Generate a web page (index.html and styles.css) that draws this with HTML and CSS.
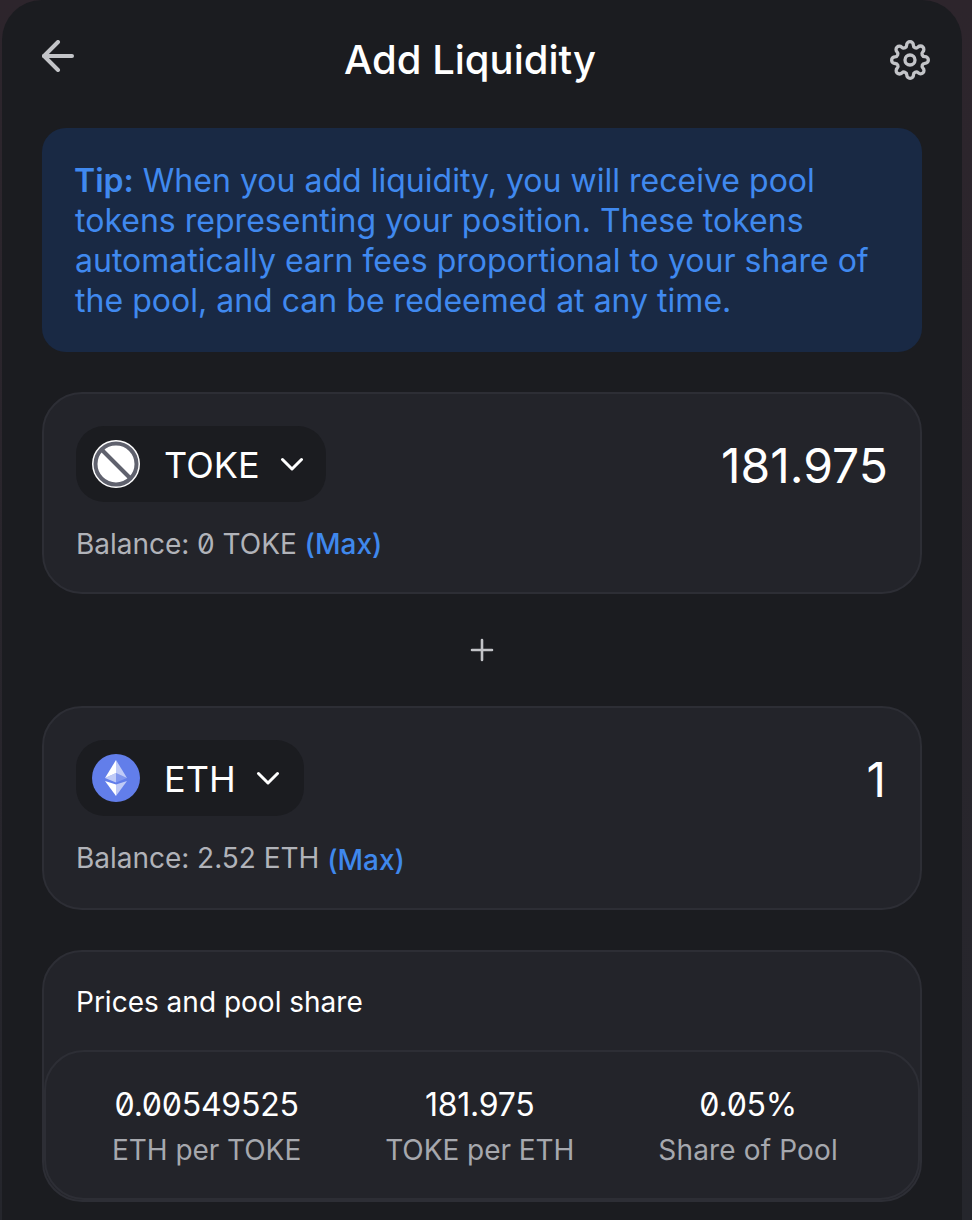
FILE: index.html
```html
<!DOCTYPE html>
<html lang="en">
<head>
<meta charset="utf-8">
<title>Add Liquidity</title>
<link rel="stylesheet" href="styles.css">
</head>
<body>
<main class="panel">
  <header class="top">
    <svg class="back" viewBox="4 4 16 16" fill="none" stroke="currentColor" stroke-width="2" stroke-linecap="round" stroke-linejoin="round"><path d="M19 12H5"/><path d="M12 19l-7-7 7-7"/></svg>
    <h1 class="title">Add Liquidity</h1>
    <svg class="gear" viewBox="0 0 24 24" fill="none" stroke="currentColor" stroke-width="2" stroke-linecap="round" stroke-linejoin="round"><circle cx="12" cy="12" r="3"/><path d="M19.4 15a1.65 1.65 0 0 0 .33 1.82l.06.06a2 2 0 0 1 0 2.83 2 2 0 0 1-2.83 0l-.06-.06a1.65 1.65 0 0 0-1.82-.33 1.65 1.65 0 0 0-1 1.51V21a2 2 0 0 1-2 2 2 2 0 0 1-2-2v-.09A1.65 1.65 0 0 0 9 19.4a1.65 1.65 0 0 0-1.82.33l-.06.06a2 2 0 0 1-2.83 0 2 2 0 0 1 0-2.83l.06-.06a1.65 1.65 0 0 0 .33-1.82 1.65 1.65 0 0 0-1.51-1H3a2 2 0 0 1-2-2 2 2 0 0 1 2-2h.09A1.65 1.65 0 0 0 4.6 9a1.65 1.65 0 0 0-.33-1.82l-.06-.06a2 2 0 0 1 0-2.83 2 2 0 0 1 2.83 0l.06.06a1.65 1.65 0 0 0 1.82.33H9a1.65 1.65 0 0 0 1-1.51V3a2 2 0 0 1 2-2 2 2 0 0 1 2 2v.09a1.65 1.65 0 0 0 1 1.51 1.65 1.65 0 0 0 1.82-.33l.06-.06a2 2 0 0 1 2.83 0 2 2 0 0 1 0 2.83l-.06.06a1.65 1.65 0 0 0-.33 1.82V9a1.65 1.65 0 0 0 1.51 1H21a2 2 0 0 1 2 2 2 2 0 0 1-2 2h-.09a1.65 1.65 0 0 0-1.51 1z"/></svg>
  </header>

  <p class="tip"><b>Tip:</b> When you add liquidity, you will receive pool tokens representing your position. These tokens automatically earn fees proportional to your share of the pool, and can be redeemed at any time.</p>

  <section class="card">
    <div class="row">
      <div class="pill">
        <svg class="token" viewBox="0 0 48 48"><circle cx="24" cy="24" r="24" fill="#fff"/><circle cx="24" cy="24" r="20.5" fill="#fff" stroke="#5f616d" stroke-width="4"/><path d="M10 10L38 38" stroke="#5f616d" stroke-width="4"/></svg>
        <span class="sym">TOKE</span>
        <svg class="chev" viewBox="0 0 24 14" fill="none" stroke="currentColor" stroke-width="3" stroke-linecap="round" stroke-linejoin="round"><path d="M2.500 2.500L12 12l9.500-9.500"/></svg>
      </div>
      <span class="amount">181.975</span>
    </div>
    <p class="bal">Balance: <span class="num">0</span> TOKE <span class="max">(Max)</span></p>
  </section>

  <div class="plus"><svg viewBox="0 0 24 24" fill="none" stroke="currentColor" stroke-width="2.600" stroke-linecap="round"><path d="M12 2v20M2 12h20"/></svg></div>

  <section class="card card-eth">
    <div class="row">
      <div class="pill">
        <svg class="token" viewBox="0 0 48 48"><circle cx="24" cy="24" r="24" fill="#627eea"/><path d="M24 6v13l11 5z" fill="#fff" fill-opacity=".6"/><path d="M24 6L13 24l11-5z" fill="#fff"/><path d="M24 30.600v11.400l11-15z" fill="#fff" fill-opacity=".6"/><path d="M24 42V30.600l-11-3.600z" fill="#fff"/><path d="M24 28.500l11-4.500-11-5z" fill="#fff" fill-opacity=".2"/><path d="M13 24l11 4.500V19z" fill="#fff" fill-opacity=".6"/></svg>
        <span class="sym">ETH</span>
        <svg class="chev" viewBox="0 0 24 14" fill="none" stroke="currentColor" stroke-width="3" stroke-linecap="round" stroke-linejoin="round"><path d="M2.500 2.500L12 12l9.500-9.500"/></svg>
      </div>
      <span class="amount">1</span>
    </div>
    <p class="bal">Balance: 2.52 ETH <span class="max">(Max)</span></p>
  </section>

  <section class="card prices">
    <h2 class="prices-title">Prices and pool share</h2>
    <div class="stats">
      <div class="stat"><span class="val">0.00549525</span><span class="lab">ETH per TOKE</span></div>
      <div class="stat"><span class="val">181.975</span><span class="lab">TOKE per ETH</span></div>
      <div class="stat"><span class="val">0.05%</span><span class="lab lab-wide">Share of Pool</span></div>
    </div>
  </section>
</main>
</body>
</html>
```
FILE: styles.css
```css
* { box-sizing: border-box; }
html, body { margin: 0; height: 100%; }
body {
  background: linear-gradient(180deg, #2d252c, #25262c);
  font-family: Inter, "Liberation Sans", sans-serif;
  overflow: hidden;
  color: #fff;
}
.panel {
  margin-left: 2px;
  width: 960px;
  height: 1220px;
  background: #1b1c20;
  border-radius: 40px 40px 0 0;
  padding: 40px 40px 0;
}
.top { display: flex; align-items: flex-start; height: 88px; }
.back { width: 32px; height: 32px; color: #c3c4c8; }
.title {
  margin: 0 0 0 270px;
  font-size: 40px;
  line-height: 40px;
  font-weight: 450;
}
.gear { width: 40px; height: 40px; margin-left: auto; margin-right: -8px; color: #c3c4c8; }
.tip {
  margin: 0;
  height: 224px;
  padding: 33px 32px 0 33px;
  background: #192944;
  border-radius: 24px;
  color: #4089ef;
  font-size: 32px;
  line-height: 40px;
  letter-spacing: .02px;
}
.tip b { font-weight: 600; margin-left: -1px; }
.card {
  margin-top: 40px;
  height: 202px;
  padding: 32px;
  background: #23242a;
  border: 2px solid #2d2e35;
  border-radius: 40px;
}
.row { display: flex; justify-content: space-between; align-items: center; }
.pill {
  display: flex;
  align-items: center;
  height: 76px;
  padding: 0 22px 0 16px;
  background: #1b1c20;
  border-radius: 28px;
}
.token { width: 48px; height: 48px; }
.sym { margin: 2px 0 0 24px; font-size: 36px; font-weight: 430; line-height: 40px; }
.chev { width: 24px; height: 14px; margin-left: 20px; }
.amount { margin-top: 4px; font-size: 48px; font-weight: 400; line-height: 56px; }
.card-eth .pill { padding-right: 24px; }
.card-eth .amount { margin-right: 2px; }
.bal {
  margin: 25px 0 0;
  color: #b1b3b9;
  font-size: 28px;
  line-height: 34px;
  letter-spacing: -.03px;
}
.num { font-feature-settings: "zero"; }
.max { color: #3f88ec; font-weight: 450; }
.plus { display: flex; justify-content: center; align-items: center; height: 112px; color: #c3c4c8; }
.plus svg { width: 24px; height: 24px; }
.card-eth { margin-top: 0; height: 204px; }
.card-eth .bal { margin-top: 25px; }
.card-eth .max { vertical-align: -2px; }
.prices { height: 252px; padding: 33px 0 0; }
.prices-title {
  margin: 0 0 0 32px;
  font-size: 28px;
  line-height: 34px;
  font-weight: 440;
}
.stats {
  display: flex;
  gap: 84px;
  margin: 31px 0 0;
  height: 150px;
  border: 2px solid #2d2e35;
  border-radius: 40px;
  padding: 33px 0 0 66px;
}
.stat { display: flex; flex-direction: column; align-items: center; }
.val { font-size: 32px; line-height: 40px; font-weight: 430; letter-spacing: -.25px; font-feature-settings: "zero"; }
.lab { font-size: 28px; line-height: 34px; margin-top: 8px; color: #a6a8ae; letter-spacing: -.05px; }
.lab-wide { letter-spacing: .15px; }
```
